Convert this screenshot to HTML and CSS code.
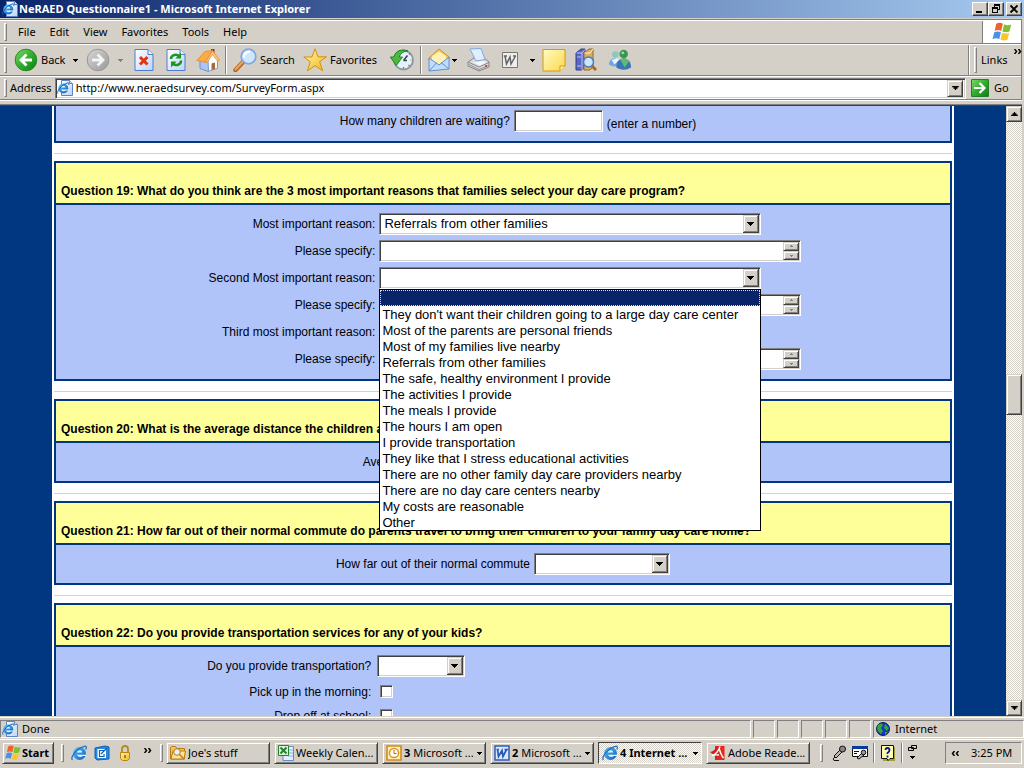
FILE: index.html
```html
<!DOCTYPE html>
<html lang="en">
<head>
<meta charset="utf-8">
<title>NeRAED Questionnaire1 - Microsoft Internet Explorer</title>
<link rel="stylesheet" href="styles.css">
</head>
<body>
<svg class="defs" aria-hidden="true">
  <defs>
    <linearGradient id="gGreen" x1="0" y1="0" x2="1" y2="1"><stop offset="0" stop-color="#7ed86c"/><stop offset=".5" stop-color="#2fae2c"/><stop offset="1" stop-color="#0f7d14"/></linearGradient>
    <linearGradient id="gGray" x1="0" y1="0" x2="1" y2="1"><stop offset="0" stop-color="#d8d8d8"/><stop offset="1" stop-color="#989898"/></linearGradient>
    <linearGradient id="gPage" x1="0" y1="0" x2="1" y2="1"><stop offset="0" stop-color="#fff"/><stop offset="1" stop-color="#bcd4fa"/></linearGradient>
    <linearGradient id="gBlue" x1="0" y1="0" x2="1" y2="1"><stop offset="0" stop-color="#5cc4f8"/><stop offset="1" stop-color="#0b5cc0"/></linearGradient>
    <linearGradient id="gNote" x1="0" y1="0" x2="1" y2="1"><stop offset="0" stop-color="#fffbc0"/><stop offset="1" stop-color="#fbd94f"/></linearGradient>
    <linearGradient id="gGold" x1="0" y1="0" x2="1" y2="1"><stop offset="0" stop-color="#fff6a8"/><stop offset="1" stop-color="#f4b51e"/></linearGradient>
    <symbol id="ie" viewBox="0 0 16 16"><circle cx="8.500" cy="8.500" r="6.500" fill="url(#gBlue)"/><path d="M5.800 7.500q.5-2.200 2.800-2.200t2.700 2.200zM5.800 9.700H15v1.400h-3.200q-3.500 2.400-6-1.400z" fill="#e6f4ff"/><path d="M1.500 15C-1 12.500 5 3.500 13.500 1.300c2.300-.5 2 1.500 1.300 3.200" fill="none" stroke="#1c76cc" stroke-width="1.300"/></symbol>
    <symbol id="iepage" viewBox="0 0 16 16"><path d="M4.500.5h8l3 3v12h-11z" fill="url(#gPage)" stroke="#5b83c8"/><path d="M12.500.5v3h3" fill="#dbe8fc" stroke="#5b83c8"/><circle cx="6.300" cy="8.500" r="5" fill="url(#gBlue)"/><path d="M4 7.600q.6-1.800 2.300-1.800t2.200 1.800zM4 9.400h7.500v1.200H9q-3 2-5-1.200z" fill="#eef8ff"/><path d="M.8 13.500C-.5 11.500 4.500 4.500 11 2.800q1.500 0 .8 2" fill="none" stroke="#1668bc"/></symbol>
    <symbol id="win" viewBox="0 0 20 20"><path d="M4.800 2.500q3-1.800 6 0L9.300 9q-3-1.500-6 0z" fill="#f0622a"/><path d="M11.900 3q3 1.600 6.500.2L16.800 9.500q-3.500 1.500-6.400 0z" fill="#7cc22f"/><path d="M3 10.200q3-1.500 6 0L7.500 16.500q-3-1.700-6.200 0z" fill="#4793e6"/><path d="M10.100 10.700q3.200 1.400 6.400.1L15 17q-3.300 1.500-6.400-.2z" fill="#fbc52c"/></symbol>
    <symbol id="back" viewBox="0 0 24 24"><circle cx="12" cy="12" r="10.800" fill="url(#gGreen)" stroke="#2b8a2b"/><path d="M18 12H8M12.500 6.500L7 12l5.500 5.500" fill="none" stroke="#fff" stroke-width="2.800"/></symbol>
    <symbol id="fwd" viewBox="0 0 24 24"><circle cx="12" cy="12" r="10.800" fill="url(#gGray)" stroke="#989898"/><path d="M6 12h10M11.500 6.500L17 12l-5.500 5.500" fill="none" stroke="#f4f4f4" stroke-width="2.800"/></symbol>
    <symbol id="stop" viewBox="0 0 20 24"><path d="M1 1.500h13l5 5v16H1z" fill="url(#gPage)" stroke="#4d7dcc"/><path d="M14 1.500v5h5" fill="#e8f0fe" stroke="#4d7dcc"/><path d="M6 9l7.500 7.500M13.500 9L6 16.500" stroke="#e8330c" stroke-width="3"/></symbol>
    <symbol id="refresh" viewBox="0 0 20 24"><path d="M1 1.500h13l5 5v16H1z" fill="url(#gPage)" stroke="#4d7dcc"/><path d="M14 1.500v5h5" fill="#e8f0fe" stroke="#4d7dcc"/><path d="M5 11c0-4 5-5.500 8-3M15 12.500c0 4.500-5 5.800-8 3.300" fill="none" stroke="#159a1c" stroke-width="2.500"/><path d="M15 4.500v6H9.500zM5 19.500v-6h5.500z" fill="#159a1c"/></symbol>
    <symbol id="home" viewBox="0 0 24 24"><path d="M15 1h3.500v7H15z" fill="#c8261a"/><path d="M4 12v8.500l8.500 3V11z" fill="#a9c6f4" stroke="#6d8fc9"/><path d="M12.500 23.300l9-3v-9l-4.500-7-5 8z" fill="#fdfdff" stroke="#7f98c8"/><path d="M.8 12.500L9 3.500l7.500-1L9.500 14.500z" fill="#fbaa45" stroke="#e58a2a" stroke-width=".8"/><path d="M16.500 2.500l7 9.500-2 1-5-6.500-5.500 8-1.500-.5z" fill="#ffc777" stroke="#e0882a" stroke-width=".7"/><path d="M15.500 15.500l3.500-1v6.500l-3.500 1z" fill="#a66a32"/></symbol>
    <symbol id="search" viewBox="0 0 24 24"><path d="M2.500 22l7.500-8" stroke="#b5651d" stroke-width="4.500" stroke-linecap="round"/><path d="M2.500 21.500l7-7.500" stroke="#f2a65a" stroke-width="2" stroke-linecap="round"/><circle cx="15.500" cy="8.500" r="7.300" fill="#cfe6fd" stroke="#7ea9e0" stroke-width="1.800"/><path d="M10.500 9.500q1-6 6.500-5.500" stroke="#fff" stroke-width="2.200" fill="none"/></symbol>
    <symbol id="star" viewBox="0 0 24 24"><path d="M12 .8l3 8h8.500l-6.800 5 3 9L12 17.500l-7.500 5.300 2.700-9L.8 9H9z" fill="url(#gGold)" stroke="#d29207"/></symbol>
    <symbol id="history" viewBox="0 0 24 24"><circle cx="13.500" cy="12" r="9.500" fill="#e4f2fc" stroke="#8b97a3" stroke-width="1.800"/><path d="M13.500 12.500l4-5M13.500 12.500h3.500" stroke="#31424e" stroke-width="1.500"/><path d="M20.500 12h1M13.500 19v1.500M18.500 17l1 1M19 6.500l1-1" stroke="#d0482c" stroke-width="1.200"/><path d="M18 2.800Q7-.5 3.500 9H.3l6 8.500L12.500 9H9.200Q11 3.500 18 2.800z" fill="#4cb83f" stroke="#1a7f20" stroke-width=".9"/></symbol>
    <symbol id="mail" viewBox="0 0 24 24"><path d="M2 10L12 1l10 8v3H2z" fill="#fbcb58" stroke="#d18d18"/><path d="M5 8l7-4.500L19 8v8H5z" fill="#fff0b5"/><path d="M2 10v13l20-2V9l-10 8z" fill="#c0dcfc" stroke="#5f90da"/><path d="M2 23l8-8.500M22 21l-8-6.500" stroke="#5f90da"/></symbol>
    <symbol id="print" viewBox="0 0 24 24"><path d="M2 14l6-4h10l5 4v5l-10 4-11-5z" fill="#dcdcdc" stroke="#858585"/><path d="M4 1l11-.5 4 11-9 1.500z" fill="#e2eefe" stroke="#7fa8e0"/><path d="M2 14l11 5 10-4.500M3 16.500l10 5 9.500-4" stroke="#8a8a8a" fill="none"/><path d="M7 14.500l10-1.500 3 1.500-6 3z" fill="#f7f7f7"/><circle cx="20" cy="18" r="1" fill="#d22"/></symbol>
    <symbol id="wgray" viewBox="0 0 16 16"><path d="M.5.5h15v15H.5z" fill="#eee" stroke="#777"/><path d="M3 4l1.500 8L8 5l1 7 4.500-8M1.800 4H5M11 4h3" fill="none" stroke="#646464" stroke-width="1.500"/></symbol>
    <symbol id="wblue" viewBox="0 0 16 16"><path d="M1 1h14v14H1z" fill="#dce8fc" stroke="#2a5cb8" stroke-width="1.500"/><path d="M3.500 4.500l1 7L8 5.500l1 6 3.500-7M2.500 4.500H5M10.500 4.500h3.500" fill="none" stroke="#2558b8" stroke-width="1.700"/></symbol>
    <symbol id="note" viewBox="0 0 24 24"><path d="M1 1.500h22V18l-5 5H1z" fill="url(#gNote)" stroke="#d69a0c"/><path d="M18 23v-5h5" fill="#fff2b2" stroke="#d69a0c"/></symbol>
    <symbol id="books" viewBox="0 0 24 24"><path d="M2 5l5-4h4v18l-3 3H2z" fill="#5a67bd" stroke="#333f8d"/><path d="M2.500 5H8l3-3.500M8 5v17M3 9h4M3 18h4" stroke="#bac4ff" fill="none"/><path d="M10 5l5-4h4v18l-3 3h-6z" fill="#e2ad58" stroke="#8b6a38"/><path d="M10.500 5H16l3-4" stroke="#fff2cc" fill="none"/><path d="M18 18l4 4" stroke="#a96b24" stroke-width="3"/><circle cx="14.500" cy="14" r="5" fill="#cae6fc" stroke="#477bc2" stroke-width="1.500"/></symbol>
    <symbol id="people" viewBox="0 0 26 24"><path d="M1 17q0-6 6-7 6 1 6 7-5 4-12 0z" fill="#6fa5e4"/><path d="M4 12l3 5 5-5-2-2z" fill="#e9f6ff"/><circle cx="8" cy="6" r="3.600" fill="#8ac8c0"/><path d="M9 20q0-9 8-10 8 1 8 10-8 5-16 0z" fill="#3976b6"/><path d="M13 11l5 9 5-7-4-3z" fill="#63b974"/><circle cx="17" cy="5.500" r="4.600" fill="#379653"/><circle cx="16" cy="4.300" r="1.600" fill="#9ad39b"/></symbol>
    <symbol id="go" viewBox="0 0 18 18"><path d="M0 0h18v18H0z" fill="#fff"/><path d="M.5.5h17v17H.5z" fill="url(#gGreen)" stroke="#257e2b"/><path d="M3 9h10M8.500 4l5 5-5 5" fill="none" stroke="#fff" stroke-width="2.200"/></symbol>
    <symbol id="desk" viewBox="0 0 16 16"><path d="M1 3l10-2 4 1v12l-12 1-2-2z" fill="#238ae6" stroke="#1260ae"/><path d="M3.500 4h8.500v9H3.500z" fill="#fff"/><path d="M10 5.500H5.500v6H10V9M7 9l6-6" stroke="#1260ae" stroke-width="1.200" fill="none"/></symbol>
    <symbol id="lock" viewBox="0 0 12 16"><path d="M3 8V4q0-3 3-3t3 3v4" fill="none" stroke="#b38b20" stroke-width="1.800"/><path d="M1.500 7.500h9v6l-2 2h-5l-2-2z" fill="url(#gGold)" stroke="#bd8414"/><path d="M6 10v3" stroke="#8a6110" stroke-width="1.500"/></symbol>
    <symbol id="folder" viewBox="0 0 16 16"><path d="M.5 14V2.500l1-1h4l1.500 2h7.500V14z" fill="#f7c34a" stroke="#ba7c12"/><path d="M1 14l2-8h12.500L14 14z" fill="#ffe58d" stroke="#ba7c12"/><circle cx="7" cy="7" r="3.300" fill="#e3f1fe" stroke="#b57928"/><path d="M9.500 9.500l4 4" stroke="#b57928" stroke-width="1.500"/></symbol>
    <symbol id="excel" viewBox="0 0 16 16"><path d="M5 1.500h10.500v14H5z" fill="#e3effe" stroke="#628dc9"/><path d="M10 5h5M10 8h5M10 11h5" stroke="#8cacde"/><path d="M.5.5h10v10H.5z" fill="#dff2de" stroke="#25832d"/><path d="M2.500 2.500l6 6M8.500 2.500l-6 6" stroke="#25832d" stroke-width="2"/></symbol>
    <symbol id="outlook" viewBox="0 0 16 16"><path d="M1 1h14v14H1z" fill="#fff1bd" stroke="#d58a12" stroke-width="1.600"/><circle cx="8" cy="8" r="4.600" fill="#fff" stroke="#e1951b" stroke-width="1.500"/><path d="M8 5v3.500h2.500" fill="none" stroke="#b36b0a"/></symbol>
    <symbol id="adobe" viewBox="0 0 16 16"><path d="M5 1h9.500v14H5z" fill="#e2281c"/><path d="M0 7q4-.5 8-6L6.500 15 4.500 10.500z" fill="#c9201a"/><path d="M10 1.500Q7.500 9 2 10.500q4-1 7-.5M9 3q2 7 4.500 10" stroke="#fff" stroke-width="1.400" fill="none"/></symbol>
    <symbol id="globe" viewBox="0 0 14 14"><circle cx="7" cy="7" r="6.500" fill="#1c33c4" stroke="#092052"/><path d="M2 3q4-3 5 0L5 6l2 3-2 3Q1 9 1 6zM9 2l4 4-2 3-3-3zM9 10l3 0-3 3z" fill="#2fa83c"/></symbol>
    <symbol id="mic" viewBox="0 0 16 16"><path d="M3 11l7-7 2 2-7 7z" fill="#bbb" stroke="#111"/><circle cx="11.500" cy="4" r="3" fill="#888" stroke="#111"/><path d="M4 12q-3 2-1 3.500h5" fill="none" stroke="#111"/></symbol>
    <symbol id="tools" viewBox="0 0 16 16"><path d="M.5 1.500h15v10H.5z" fill="#fff" stroke="#111"/><path d="M0 1h16v3H0z" fill="#0a3aa0"/><path d="M2 6.500h5M2 8.500h3" stroke="#111"/><path d="M5 13l5-5 2 2-5 4z" fill="#bbb" stroke="#111"/><circle cx="11.500" cy="7.500" r="2.300" fill="#999" stroke="#111"/></symbol>
    <symbol id="help" viewBox="0 0 14 16"><path d="M2 2h12v14H2z" fill="#a39e3e"/><path d="M.5.5h12v13H9l-2 2-1-2H.5z" fill="#ffffb3" stroke="#111"/><path d="M4.500 5q0-2 2-2t2 2-2 3v1M6.500 10.500v2" stroke="#101090" stroke-width="1.800" fill="none"/></symbol>
    <symbol id="tri" viewBox="0 0 5 3"><path d="M0 0h5v1H0zM1 1h3v1H1zM2 2h1v1H2z"/></symbol>
    <symbol id="chev" viewBox="0 0 8 5"><path d="M.5 0l2 2.500-2 2.500M4.500 0l2 2.500-2 2.500" fill="none" stroke="#000" stroke-width="1.500"/></symbol>
  </defs>
</svg>

<header class="titlebar">
  <svg class="i16"><use href="#iepage"/></svg>
  <h1 class="titlebar__text">NeRAED Questionnaire1 - Microsoft Internet Explorer</h1>
  <button class="winbtn" aria-label="Minimize"><svg viewBox="0 0 12 10"><path d="M2 7h6v2H2z"/></svg></button>
  <button class="winbtn" aria-label="Restore"><svg viewBox="0 0 12 10"><path d="M4 0h6v2H4zM9 2h1v4H8V5h1zM4 2h1v1H4zM2 3h6v2H2zM2 5h1v4H2zM7 5h1v4H7zM2 8h6v1H2z"/></svg></button>
  <button class="winbtn winbtn--close" aria-label="Close"><svg viewBox="0 0 12 10"><path d="M2.500 1.500l7 7M9.500 1.500l-7 7" stroke="#000" stroke-width="1.800"/></svg></button>
</header>

<div class="bands">
  <div class="band band--menu">
    <nav class="menu">
      <span class="grip"></span>
      <button class="menu__item">File</button><button class="menu__item">Edit</button><button class="menu__item">View</button><button class="menu__item">Favorites</button><button class="menu__item">Tools</button><button class="menu__item">Help</button>
    </nav>
    <div class="brand"><svg class="i20"><use href="#win"/></svg></div>
  </div>
  <div class="band band--tools">
    <div class="tools">
      <span class="grip"></span>
      <button class="tool tool--back"><svg class="i24"><use href="#back"/></svg>Back</button>
      <button class="tool tool--drop" aria-label="Back history"><svg class="tri"><use href="#tri"/></svg></button>
      <button class="tool tool--fwd" aria-label="Forward"><svg class="i24"><use href="#fwd"/></svg></button>
      <button class="tool tool--drop tool--off" aria-label="Forward history"><svg class="tri"><use href="#tri"/></svg></button>
      <button class="tool tool--wide" aria-label="Stop"><svg class="i20x24"><use href="#stop"/></svg></button>
      <button class="tool tool--wide" aria-label="Refresh"><svg class="i20x24"><use href="#refresh"/></svg></button>
      <button class="tool tool--wide" aria-label="Home"><svg class="i24"><use href="#home"/></svg></button>
      <span class="sep sep--tools"></span>
      <button class="tool tool--search"><svg class="i24"><use href="#search"/></svg>Search</button>
      <button class="tool tool--fav"><svg class="i24"><use href="#star"/></svg>Favorites</button>
      <button class="tool tool--history" aria-label="History"><svg class="i24"><use href="#history"/></svg></button>
      <span class="sep sep--tools"></span>
      <button class="tool tool--mail" aria-label="Mail"><svg class="i24"><use href="#mail"/></svg><svg class="tri"><use href="#tri"/></svg></button>
      <button class="tool tool--print" aria-label="Print"><svg class="i24"><use href="#print"/></svg></button>
      <button class="tool tool--edit" aria-label="Edit with Word"><svg class="i16"><use href="#wgray"/></svg><svg class="tri"><use href="#tri"/></svg></button>
      <button class="tool tool--wide" aria-label="Discuss"><svg class="i24"><use href="#note"/></svg></button>
      <button class="tool tool--wide" aria-label="Research"><svg class="i24"><use href="#books"/></svg></button>
      <button class="tool tool--people" aria-label="Messenger"><svg class="i24"><use href="#people"/></svg></button>
    </div>
    <div class="links"><span class="grip"></span><span>Links</span><svg class="chev"><use href="#chev"/></svg></div>
  </div>
  <div class="band band--address">
    <div class="address">
      <span class="grip"></span>
      <label for="url">Address</label>
      <div class="address__box">
        <svg class="i16"><use href="#iepage"/></svg>
        <input class="address__input" id="url" type="text" value="http://www.neraedsurvey.com/SurveyForm.aspx">
        <button class="raised address__drop" aria-label="Show addresses"><svg class="tri tri--big"><use href="#tri"/></svg></button>
      </div>
    </div>
    <button class="go"><svg class="i18"><use href="#go"/></svg>Go</button>
  </div>
</div>

<div class="viewport">
  <main class="page">
    <form class="survey">
      <section class="card card--cut">
        <div class="card__body card__body--line">
          <label for="waiting">How many children are waiting?</label>
          <input class="field field--number" id="waiting" type="text">
          <span class="unit">(enter a number)</span>
        </div>
      </section>
      <hr class="rule">
      <section class="card">
        <h2 class="card__head">Question 19: What do you think are the 3 most important reasons that families select your day care program?</h2>
        <div class="card__body card__body--reasons">
          <label for="r1">Most important reason:</label>
          <select class="field field--reason" id="r1"><option>Referrals from other families</option></select>
          <label for="s1">Please specify:</label>
          <div class="memo"><textarea class="memo__text" id="s1" rows="1"></textarea><span class="memo__bar"><span class="raised memo__up"></span><span class="raised memo__down"></span></span></div>
          <label for="r2">Second Most important reason:</label>
          <div class="combo">
            <select class="field field--reason" id="r2"><option></option></select>
            <ul class="list" role="listbox">
              <li class="list__item list__item--on" role="option" aria-selected="true"></li>
              <li class="list__item" role="option">They don't want their children going to a large day care center</li>
              <li class="list__item" role="option">Most of the parents are personal friends</li>
              <li class="list__item" role="option">Most of my families live nearby</li>
              <li class="list__item" role="option">Referrals from other families</li>
              <li class="list__item" role="option">The safe, healthy environment I provide</li>
              <li class="list__item" role="option">The activities I provide</li>
              <li class="list__item" role="option">The meals I provide</li>
              <li class="list__item" role="option">The hours I am open</li>
              <li class="list__item" role="option">I provide transportation</li>
              <li class="list__item" role="option">They like that I stress educational activities</li>
              <li class="list__item" role="option">There are no other family day care providers nearby</li>
              <li class="list__item" role="option">There are no day care centers nearby</li>
              <li class="list__item" role="option">My costs are reasonable</li>
              <li class="list__item" role="option">Other</li>
            </ul>
          </div>
          <label for="s2">Please specify:</label>
          <div class="memo"><textarea class="memo__text" id="s2" rows="1"></textarea><span class="memo__bar"><span class="raised memo__up"></span><span class="raised memo__down"></span></span></div>
          <label for="r3">Third most important reason:</label>
          <select class="field field--reason" id="r3"><option></option></select>
          <label for="s3">Please specify:</label>
          <div class="memo"><textarea class="memo__text" id="s3" rows="1"></textarea><span class="memo__bar"><span class="raised memo__up"></span><span class="raised memo__down"></span></span></div>
        </div>
      </section>
      <hr class="rule">
      <section class="card">
        <h2 class="card__head">Question 20: What is the average distance the children a</h2>
        <div class="card__body card__body--line">
          <label for="avg">Ave</label>
          <select class="field field--distance" id="avg"><option></option></select>
        </div>
      </section>
      <hr class="rule">
      <section class="card">
        <h2 class="card__head">Question 21: How far out of their normal commute do parents travel to bring their children to your family day care home?</h2>
        <div class="card__body card__body--line">
          <label for="far">How far out of their normal commute</label>
          <select class="field field--commute" id="far"><option></option></select>
        </div>
      </section>
      <hr class="rule">
      <section class="card">
        <h2 class="card__head">Question 22: Do you provide transportation services for any of your kids?</h2>
        <div class="card__body card__body--split">
          <label for="tr">Do you provide transportation?</label>
          <select class="field field--short" id="tr"><option></option></select>
          <label for="pick">Pick up in the morning:</label>
          <input class="check" id="pick" type="checkbox">
          <label for="drop">Drop off at school:</label>
          <input class="check" id="drop" type="checkbox">
        </div>
      </section>
    </form>
  </main>
  <div class="scroll">
    <button class="raised scroll__btn" aria-label="Scroll up"><svg class="tri tri--big tri--up"><use href="#tri"/></svg></button>
    <div class="scroll__track"><span class="scroll__before"></span><span class="raised scroll__thumb"></span><span class="scroll__after"></span></div>
    <button class="raised scroll__btn" aria-label="Scroll down"><svg class="tri tri--big"><use href="#tri"/></svg></button>
  </div>
</div>

<div class="status">
  <div class="pane pane--main"><svg class="i16"><use href="#iepage"/></svg>Done</div>
  <div class="pane"></div><div class="pane"></div><div class="pane"></div><div class="pane"></div><div class="pane"></div>
  <div class="pane pane--zone"><svg class="i14"><use href="#globe"/></svg>Internet</div>
</div>

<footer class="taskbar">
  <button class="raised start"><svg class="i18"><use href="#win"/></svg>Start</button>
  <span class="grip"></span>
  <div class="quick">
    <button class="tool" aria-label="Internet Explorer"><svg class="i16"><use href="#ie"/></svg></button>
    <button class="tool" aria-label="Show desktop"><svg class="i16"><use href="#desk"/></svg></button>
    <button class="tool" aria-label="Lock"><svg class="i16"><use href="#lock"/></svg></button>
    <svg class="chev chev--quick"><use href="#chev"/></svg>
  </div>
  <span class="grip"></span>
  <div class="tasks">
    <button class="raised task"><svg class="i16"><use href="#folder"/></svg><span class="task__name">Joe's stuff</span></button>
    <button class="raised task"><svg class="i16"><use href="#excel"/></svg><span class="task__name">Weekly Calen...</span></button>
    <button class="raised task"><svg class="i16"><use href="#outlook"/></svg><span class="task__name"><b>3</b> Microsoft ...</span><svg class="tri"><use href="#tri"/></svg></button>
    <button class="raised task"><svg class="i16"><use href="#wblue"/></svg><span class="task__name"><b>2</b> Microsoft ...</span><svg class="tri"><use href="#tri"/></svg></button>
    <button class="task task--on"><svg class="i16"><use href="#ie"/></svg><span class="task__name">4 Internet ...</span><svg class="tri"><use href="#tri"/></svg></button>
    <button class="raised task"><svg class="i16"><use href="#adobe"/></svg><span class="task__name">Adobe Reade...</span></button>
  </div>
  <span class="grip"></span>
  <div class="lang">
    <svg class="i16"><use href="#mic"/></svg>
    <svg class="i16"><use href="#tools"/></svg>
    <span class="sep"></span>
    <svg class="i16"><use href="#help"/></svg>
    <span class="sep"></span>
    <svg class="lang__opt" viewBox="0 0 9 16"><path d="M3.500 1.500h5v3h-5zM.5 3.500h5v3h-5z" fill="#d4d0c8" stroke="#000"/><path d="M2 12h5v1H2zM3 13h3v1H3zM4 14h1v1H4z"/></svg>
  </div>
  <div class="tray"><svg class="chev chev--left"><use href="#chev"/></svg><time>3:25 PM</time></div>
</footer>
</body>
</html>
```

FILE: styles.css
```css
:root {
  --face: #d4d0c8;
  --shade: #808080;
  --dark: #404040;
  --navy: #003780;
  --sky: #b0c4fa;
  --ui: "Noto Sans", "Open Sans", sans-serif;
}

* { box-sizing: border-box; }

body {
  margin: 0;
  height: 100vh;
  display: flex;
  flex-direction: column;
  overflow: hidden;
  background: var(--face);
  color: #000;
  font: 11px/14px var(--ui);
}

button {
  margin: 0;
  padding: 0;
  border: 0;
  background: none;
  color: inherit;
  font: inherit;
}

svg { display: block; flex: none; }
.defs { position: absolute; width: 0; height: 0; }
.i14 { width: 14px; height: 14px; }
.i16 { width: 16px; height: 16px; }
.i18 { width: 18px; height: 18px; }
.i20 { width: 22px; height: 22px; }
.i24 { width: 24px; height: 24px; }
.i20x24 { width: 20px; height: 24px; }
.tri { width: 5px; height: 3px; }
.tri--big { width: 7px; height: 4px; }
.tri--up { transform: rotate(180deg); }
.chev { width: 8px; height: 5px; }
.chev--left { transform: rotate(180deg); }

.raised {
  background: var(--face);
  border: 1px solid;
  border-color: var(--face) var(--dark) var(--dark) var(--face);
  box-shadow: inset 1px 1px #fff, inset -1px -1px var(--shade);
}

.grip {
  flex: none;
  align-self: stretch;
  width: 3px;
  margin: 2px 0;
  border: 1px solid;
  border-color: #fff var(--shade) var(--shade) #fff;
}

.sep {
  flex: none;
  align-self: stretch;
  width: 2px;
  margin: 1px 0;
  border-left: 1px solid var(--shade);
  border-right: 1px solid #fff;
}
.sep--tools { margin: 1px; }

/* Title bar */
.titlebar {
  flex: none;
  display: flex;
  align-items: center;
  height: 18px;
  padding: 0 2px;
  background: linear-gradient(90deg, #0a246a, #a6caf0);
}
.titlebar__text {
  flex: 1;
  margin: 0 0 0 1px;
  color: #fff;
  font: bold 11px/16px var(--ui);
}
.winbtn {
  display: flex;
  align-items: center;
  justify-content: center;
  width: 16px;
  height: 14px;
  background: var(--face);
  border: 1px solid;
  border-color: #fff var(--dark) var(--dark) #fff;
  box-shadow: inset -1px -1px var(--shade);
}
.winbtn svg { width: 12px; height: 10px; }
.winbtn--close { margin-left: 2px; }

/* Menu, toolbar and address bands */
.bands {
  flex: none;
  margin: 1px 2px 4px 0;
  border: solid var(--shade);
  border-width: 1px 1px 0 0;
  box-shadow: 0 1px #fff;
}
.band {
  display: flex;
  border-top: 1px solid #fff;
  border-bottom: 1px solid var(--shade);
}
.band--menu { height: 24px; }
.band--tools { height: 32px; }
.band--address { height: 24px; }

.menu { flex: 1; display: flex; align-items: center; padding-left: 4px; border-right: 1px solid var(--shade); }
.menu__item { padding: 0 7px; }
.menu__item:first-of-type { padding-left: 11px; }
.brand { width: 38px; display: flex; align-items: center; justify-content: center; background: #fff; }

.tools { flex: 1; display: flex; align-items: center; padding-left: 4px; border-right: 1px solid var(--shade); }
.tool { display: flex; align-items: center; gap: 3px; }
.tool--back { width: 60px; padding-left: 7px; }
.tool--drop { width: 16px; justify-content: center; }
.tool--fwd { width: 29px; justify-content: center; }
.tool--off { fill: #808080; }
.tool--wide { width: 32px; justify-content: center; }
.tool--search { width: 75px; padding-left: 5px; }
.tool--fav { width: 82px; }
.tool--history { width: 34px; justify-content: center; }
.tool--mail { width: 37px; padding-left: 4px; gap: 1px; }
.tool--print { width: 36px; justify-content: center; }
.tool--edit { width: 42px; padding-left: 6px; gap: 12px; }
.tool--people { width: 36px; justify-content: center; }

.links { display: flex; align-items: center; gap: 4px; width: 52px; padding-left: 4px; border-left: 1px solid #fff; }
.links .chev { align-self: flex-start; margin: 4px 0 0 2px; }

.address { flex: 1; display: flex; align-items: center; padding-left: 4px; gap: 3px; }
.address__box {
  flex: 1;
  display: flex;
  align-items: center;
  height: 21px;
  padding: 2px 2px 2px 1px;
  background: #fff;
  border: 1px solid;
  border-color: var(--shade) #fff #fff var(--shade);
  box-shadow: inset 1px 1px var(--dark), inset -1px -1px var(--face);
}
.address__input {
  flex: 1;
  min-width: 0;
  margin: 0;
  padding: 0 0 0 3px;
  border: 0;
  background: none;
  font: 11px/14px var(--ui);
}
.address__drop { width: 16px; height: 17px; display: flex; align-items: center; justify-content: center; }
.go { display: flex; align-items: center; gap: 5px; width: 55px; padding-left: 5px; }

/* Page area */
.viewport {
  flex: 1;
  min-height: 0;
  display: flex;
  margin-right: 2px;
  border-top: 1px solid var(--shade);
  box-shadow: inset 0 1px var(--dark);
  padding-top: 1px;
}
.page {
  flex: 1;
  min-width: 0;
  overflow: hidden;
  padding: 0 52px;
  background: var(--navy);
  font: 12px/16px "Liberation Sans", Arial, sans-serif;
}
.survey { padding: 0 2px; background: #fff; }
.card { border: 2px solid var(--navy); background: var(--sky); }
.card--cut { border-top: 0; }
.card__head {
  margin: 0;
  padding: 20px 5px 4px;
  border-bottom: 2px solid var(--navy);
  background: #ffff99;
  font: bold 12px/16px "Liberation Sans", Arial, sans-serif;
  white-space: nowrap;
}
.card__body { padding: 8px; }
.card__body--line { display: flex; justify-content: center; align-items: center; gap: 4px; }
.card--cut .card__body { padding: 4px 8px 9px 38px; }
.card__body--reasons {
  display: grid;
  grid-template-columns: auto auto;
  justify-content: center;
  align-items: center;
  gap: 5px 4px;
  padding: 8px 8px 9px 12px;
}
.card__body--reasons label,
.card__body--split label { text-align: right; }
.card__body--split {
  display: grid;
  grid-template-columns: 35% 1fr;
  align-items: center;
  gap: 5px 6px;
}
.unit { align-self: flex-end; }
.rule { height: 1px; margin: 10px 0 7px; border: 0; background: #ccccff; }

.field, .memo, .check {
  margin: 0;
  background-color: #fff;
  border: 1px solid;
  border-color: var(--shade) #fff #fff var(--shade);
  border-radius: 0;
  box-shadow: inset 1px 1px var(--dark), inset -1px -1px var(--face);
  appearance: none;
}
.field {
  height: 22px;
  padding: 0 20px 0 4px;
  font: 13px/18px "Liberation Sans", Arial, sans-serif;
  color: #000;
}
select.field {
  background-image: url("data:image/svg+xml,%3Csvg xmlns='http://www.w3.org/2000/svg' width='16' height='18'%3E%3Cpath fill='%23404040' d='M0 0h16v18H0z'/%3E%3Cpath fill='%23d4d0c8' d='M0 0h15v17H0z'/%3E%3Cpath fill='%23808080' d='M1 1h14v16H1z'/%3E%3Cpath fill='%23fff' d='M1 1h13v15H1z'/%3E%3Cpath fill='%23d4d0c8' d='M2 2h12v14H2z'/%3E%3Cpath d='M4 7h7v1H4zM5 8h5v1H5zM6 9h3v1H6zM7 10h1v1H7z'/%3E%3C/svg%3E");
  background-repeat: no-repeat;
  background-position: right 1px top 1px;
}
.field--number { width: 89px; padding-right: 4px; }
.field--reason { width: 382px; }
.field--distance { width: 256px; }
.field--commute { width: 136px; }
.field--short { width: 88px; }
.check { width: 13px; height: 13px; margin: 3px; }

.memo { display: flex; width: 422px; height: 22px; padding: 1px; }
.memo__text { flex: 1; min-width: 0; margin: 0; padding: 0 2px; border: 0; background: none; resize: none; overflow: hidden; font: 13px/18px "Liberation Sans", Arial, sans-serif; }
.memo__bar { display: flex; flex-direction: column; width: 16px; }
.memo__up, .memo__down { flex: 1; background-repeat: no-repeat; background-position: center; }
.memo__up { background-image: url("data:image/svg+xml,%3Csvg xmlns='http://www.w3.org/2000/svg' width='5' height='3'%3E%3Cpath fill='%23808080' d='M2 0h1v1H2zM1 1h3v1H1z'/%3E%3C/svg%3E"); }
.memo__down { background-image: url("data:image/svg+xml,%3Csvg xmlns='http://www.w3.org/2000/svg' width='5' height='3'%3E%3Cpath fill='%23808080' d='M1 1h3v1H1zM2 2h1v1H2z'/%3E%3C/svg%3E"); }

.combo { position: relative; height: 22px; width: 382px; }
.list {
  position: absolute;
  top: 100%;
  left: 0;
  right: 0;
  z-index: 2;
  margin: 0;
  padding: 0;
  list-style: none;
  background: #fff;
  border: 1px solid #000;
  font: 13px/18px "Liberation Sans", Arial, sans-serif;
}
.list__item { height: 16px; padding-left: 2px; white-space: nowrap; }
.list__item--on { background: #0a246a; outline: 1px dotted #f5db95; outline-offset: -1px; }

/* Page scroll bar */
.scroll { display: flex; flex-direction: column; width: 16px; }
.scroll__btn { height: 16px; display: flex; align-items: center; justify-content: center; }
.scroll__track {
  flex: 1;
  display: flex;
  flex-direction: column;
  background: repeating-conic-gradient(#fff 0 25%, #d4d0c8 0 50%) 0 0 / 2px 2px;
}
.scroll__before { flex: 252; }
.scroll__thumb { height: 41px; }
.scroll__after { flex: 285; }

/* Status bar */
.status { flex: none; display: flex; gap: 2px; height: 22px; margin-top: 1px; padding: 2px 0; border-top: 1px solid #fff; }
.pane {
  display: flex;
  align-items: center;
  gap: 4px;
  width: 22px;
  height: 18px;
  border: 1px solid;
  border-color: var(--shade) #fff #fff var(--shade);
}
.pane--main { flex: 1; padding-left: 1px; }
.pane--zone { width: 151px; padding-left: 2px; gap: 5px; }

/* Task bar */
.taskbar { flex: none; display: flex; height: 29px; padding: 2px 2px 4px; border-top: 1px solid #fff; }
.start {
  display: flex;
  align-items: center;
  gap: 0;
  width: 52px;
  margin-right: 7px;
  padding-left: 1px;
  font-weight: bold;
}
.quick { display: flex; align-items: center; gap: 7px; width: 96px; padding-left: 7px; }
.chev--quick { align-self: flex-start; margin: 6px 0 0 4px; }
.tasks { flex: 1; display: flex; gap: 4px; padding: 0 10px 0 3px; }
.task { flex: 1; min-width: 0; max-width: 104px; display: flex; align-items: center; gap: 2px; padding: 0 3px; text-align: left; }
.task__name { flex: 1; min-width: 0; overflow: hidden; white-space: nowrap; }
.task--on {
  border: 1px solid;
  border-color: var(--dark) #fff #fff var(--dark);
  background: repeating-conic-gradient(#fff 0 25%, #d4d0c8 0 50%) 0 0 / 2px 2px;
  font-weight: bold;
}
.lang { display: flex; align-items: center; gap: 5px; padding: 0 0 0 8px; }
.lang__opt { width: 9px; height: 16px; align-self: flex-start; margin-top: 2px; }
.tray {
  display: flex;
  align-items: center;
  gap: 12px;
  width: 77px;
  margin-left: 28px;
  padding-left: 5px;
  border: 1px solid;
  border-color: var(--shade) #fff #fff var(--shade);
}
```
